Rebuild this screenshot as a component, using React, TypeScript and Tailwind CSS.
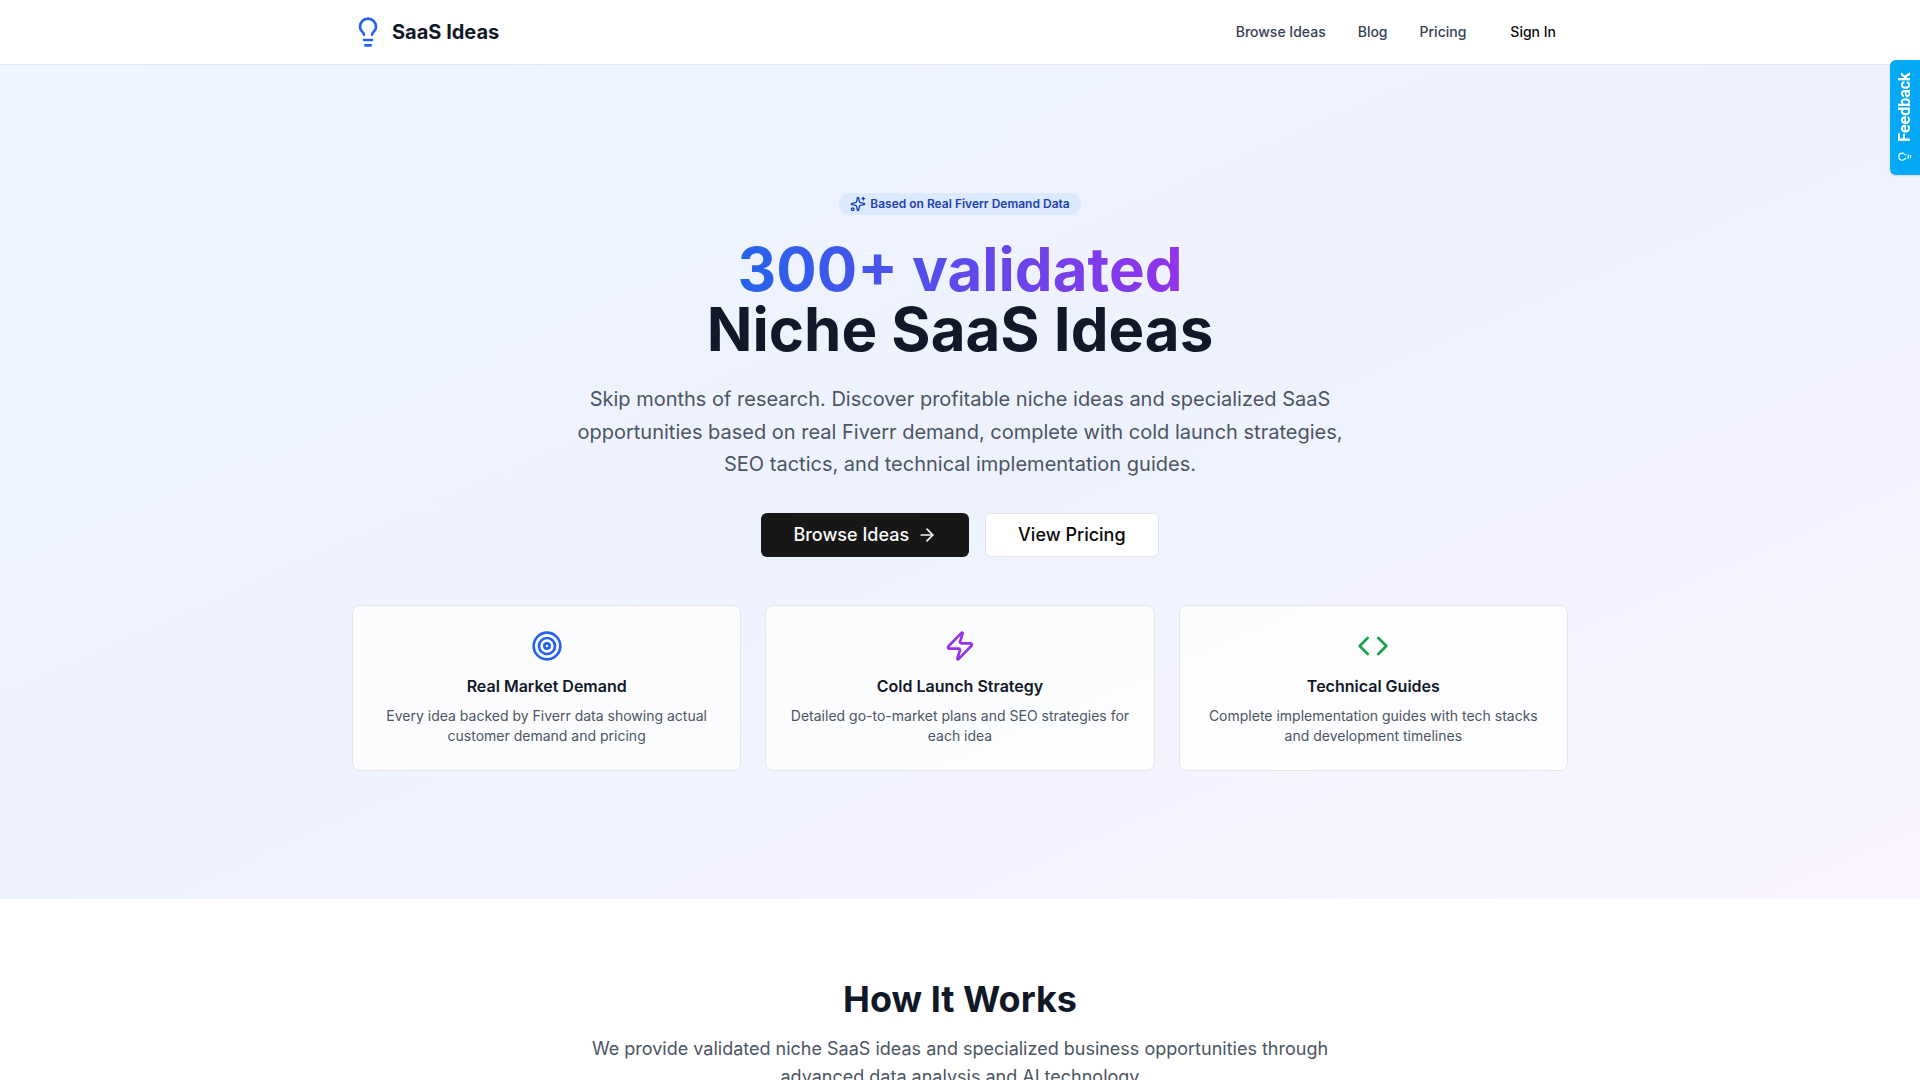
import { ArrowRight, Code, Lightbulb, Sparkles, Target, Zap } from "lucide-react";

const features = [
  { icon: Target, color: "text-[#2563eb]", title: "Real Market Demand", text: "Every idea backed by Fiverr data showing actual customer demand and pricing" },
  { icon: Zap, color: "text-[#9333ea]", title: "Cold Launch Strategy", text: "Detailed go-to-market plans and SEO strategies for each idea" },
  { icon: Code, color: "text-[#16a34a]", title: "Technical Guides", text: "Complete implementation guides with tech stacks and development timelines" },
];

function Header() {
  return (
    <header className="border-b border-[#e5e7eb] bg-white">
      <div className="mx-auto flex h-16 max-w-7xl items-center justify-between px-8">
        <a href="#" className="flex items-center gap-2">
          <Lightbulb className="size-8 text-[#2563eb]" />
          <span className="text-xl font-bold text-[#111827]">SaaS Ideas</span>
        </a>
        <nav className="flex items-center gap-8 text-sm font-medium text-[#374151]">
          <a href="#">Browse Ideas</a>
          <a href="#">Blog</a>
          <a href="#">Pricing</a>
          <button className="h-8 rounded-md px-3 text-neutral-950">Sign In</button>
        </nav>
      </div>
    </header>
  );
}

function Hero() {
  return (
    <section className="bg-[linear-gradient(to_bottom_right,#eff6ff,#eef2ff,#faf5ff)] py-32">
      <div className="mx-auto max-w-7xl px-8 text-center">
        <span className="mb-6 inline-flex items-center gap-1 rounded-full border border-transparent bg-[#dbeafe] px-2.5 py-0.5 text-xs font-semibold text-[#1e40af]">
          <Sparkles className="size-4" />
          Based on Real Fiverr Demand Data
        </span>
        <h1 className="mb-6 text-6xl font-bold text-[#111827]">
          <span className="bg-[linear-gradient(to_right,#2563eb,#9333ea)] bg-clip-text text-transparent">300+ validated</span>
          <br />
          Niche SaaS Ideas
        </h1>
        <p className="mx-auto mb-8 max-w-3xl text-xl leading-relaxed text-[#4b5563]">
          Skip months of research. Discover profitable niche ideas and specialized SaaS opportunities based on real Fiverr demand, complete with cold launch strategies, SEO tactics, and technical implementation guides.
        </p>
        <div className="mb-12 flex justify-center gap-4 text-lg font-medium">
          <button className="flex h-11 items-center gap-2 rounded-md bg-neutral-900 px-8 text-neutral-50">
            Browse Ideas
            <ArrowRight className="size-5" />
          </button>
          <button className="h-11 rounded-md border border-neutral-200 bg-white px-8 text-neutral-950">View Pricing</button>
        </div>
        <div className="grid grid-cols-1 gap-6 md:grid-cols-3">
          {features.map(({ icon: Icon, color, title, text }) => (
            <div key={title} className="rounded-lg border border-[#e5e7eb] bg-white/80 p-6">
              <Icon className={`mx-auto mb-3 size-8 ${color}`} />
              <h3 className="mb-2 font-semibold text-[#111827]">{title}</h3>
              <p className="text-sm text-[#4b5563]">{text}</p>
            </div>
          ))}
        </div>
      </div>
    </section>
  );
}

export default function App() {
  return (
    <div className="h-screen overflow-hidden bg-white font-['Inter',sans-serif]">
      <Header />
      <Hero />
      <section className="py-20 text-center">
        <h2 className="mb-4 text-4xl font-bold text-[#111827]">How It Works</h2>
        <p className="mx-auto max-w-3xl text-lg text-[#4b5563]">
          We provide validated niche SaaS ideas and specialized business opportunities through advanced data analysis and AI technology
        </p>
      </section>
      <button className="fixed top-15 right-0 flex h-[115px] w-[30px] items-center justify-center rounded-l-md bg-[#03a9f4] text-white shadow-sm">
        <span className="flex -rotate-90 items-center gap-2 font-['Roboto',sans-serif] text-base font-bold">
          <Lightbulb className="size-3.5 shrink-0" />
          Feedback
        </span>
      </button>
    </div>
  );
}
